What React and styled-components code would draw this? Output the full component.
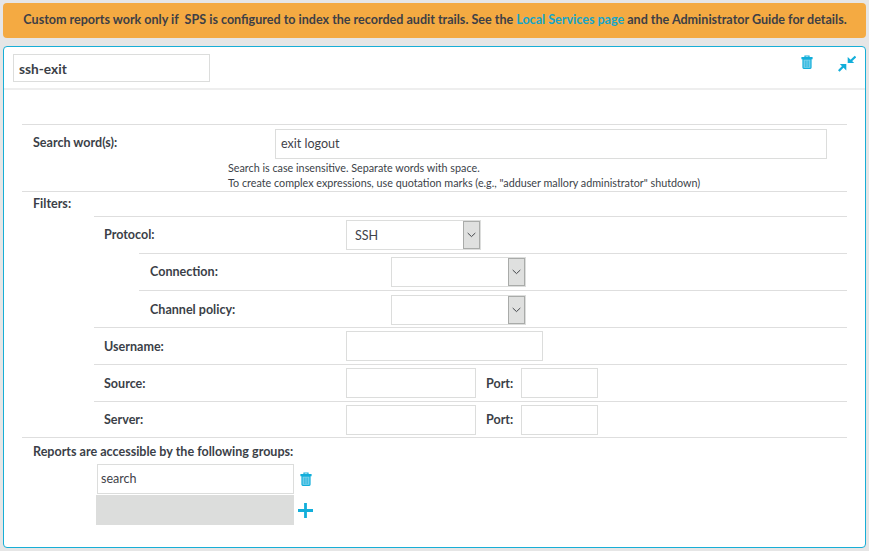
import React from "react";
import styled, { createGlobalStyle } from "styled-components";

const Global = createGlobalStyle`
  html, body { margin: 0; padding: 0; background: #e6e6e6; }
  body { font-family: Lato, "Open Sans", sans-serif; color: #3b3f48; font-size: 12.55px; }
  * { box-sizing: border-box; }
`;
const Page = styled.div`
  width: 869px; height: 551px; padding: 3px; display: flex; flex-direction: column; gap: 8px; overflow: hidden;
`;
const Banner = styled.div`
  height: 35px; background: #f4aa42; border-radius: 4px; display: flex; align-items: center; justify-content: center;
  font-weight: 700; font-size: 12.55px; color: #3d3f46; padding: 0 0 2px 1px; white-space: pre;
`;
const Link = styled.a` color: #14a5c9; `;
const Panel = styled.section`
  height: 502px; background: #fff; border: 1px solid #18aed6; border-radius: 4px; display: flex; flex-direction: column;
`;
const PanelHead = styled.header`
  height: 43px; flex: none; border-bottom: 2px solid #eeeeee; display: flex; justify-content: space-between; padding: 7px 9px 0 9px;
`;
const NameInput = styled.div`
  width: 197px; height: 28px; border: 1px solid #dcdddc; display: flex; align-items: center; padding-left: 5px;
  font-weight: 700; font-size: 13.7px;
`;
const HeadIcons = styled.div` display: flex; gap: 25px; align-items: flex-start; padding-top: 1px; `;
const Body = styled.div` padding: 34px 18px 0 18px; display: flex; flex-direction: column; `;
const Row = styled.div`
  display: flex; align-items: ${p => p.$align || "center"}; height: ${p => p.$h}px; flex: none;
  border-top: 1px solid #dedede; margin-left: ${p => p.$indent || 0}px; padding-left: ${p => p.$pad}px;
`;
const Label = styled.label`
  font-weight: 700; font-size: 12.55px; width: ${p => p.$w}px; flex: none; white-space: nowrap;
  margin-top: ${p => p.$mt || 0}px;
`;
const Field = styled.div`
  height: ${p => p.$h || 30}px; width: ${p => p.$w}px; flex: none; border: 1px solid #dcdddc; background: #fff;
  display: flex; align-items: center; padding: 0 0 ${p => p.$pb || 0}px ${p => p.$pl || 5}px; font-size: 12.55px; color: #3f4249;
  margin-top: ${p => p.$mt || 0}px;
`;
const SelectBox = styled(Field)` padding-left: 8px; justify-content: space-between; padding-right: 0; `;
const Arrow = styled.span`
  width: 17px; height: 28px; background: #dfe0df; border: 1px solid #a9aba9; display: flex; align-items: center; justify-content: center;
`;
const SearchCol = styled.div` display: flex; flex-direction: column; padding-top: 4px; `;
const Help = styled.div` font-size: 10.77px; line-height: 15px; margin: 1px 0 0 -47px; white-space: nowrap; `;
const PortLabel = styled.label` font-weight: 700; font-size: 12.55px; margin-left: 10px; width: 35px; flex: none; `;
const GroupHead = styled.div`
  height: 27px; border-top: 1px solid #dedede; padding: 6px 0 0 11px; font-weight: 700; font-size: 12.55px; line-height: 15px;
`;
const GroupRow = styled.div`
  display: flex; align-items: center; margin-left: ${p => p.$ml}px; margin-top: ${p => p.$mt || 0}px; gap: ${p => p.$gap}px;
`;
const GrayBox = styled.div` width: 198px; height: 30px; background: #dcdddc; `;
const SearchLabelInner = styled.span` display: block; padding-top: 10px; `;

const Trash = ({ size = 12 }) => (
  <svg width={size} height={size * 1.17} viewBox="0 0 12 14">
    <path d="M1 2.6h10v1.1H1z M4 2.6V1h4v1.6" fill="none" stroke="#12aeda" strokeWidth="1.2" />
    <path d="M2 4.2h8v8.2a1 1 0 0 1-1 1H3a1 1 0 0 1-1-1z" fill="#7fd3ec" stroke="#12aeda" strokeWidth="1.2" />
    <path d="M4.3 5.5v6.5M6 5.5v6.5M7.7 5.5v6.5" stroke="#12aeda" strokeWidth=".7" />
  </svg>
);
const Collapse = () => (
  <svg width="18" height="17" viewBox="0 0 18 17">
    <path d="M17.5 1.5 L12.5 6.2" stroke="#12aeda" strokeWidth="2.2" />
    <path d="M9.7 1.9V8h6.5z" fill="#12aeda" />
    <path d="M0.8 16 L5.6 11" stroke="#12aeda" strokeWidth="2.2" />
    <path d="M8.3 15.5V9H1.8z" fill="#12aeda" />
  </svg>
);
const Plus = () => (
  <svg width="17" height="17" viewBox="0 0 17 17">
    <path d="M8.5 1v15M1 8.5h15" stroke="#12aeda" strokeWidth="2.8" />
  </svg>
);
const Chevron = () => (
  <svg width="9" height="6" viewBox="0 0 9 6">
    <path d="M.7 1 L4.5 4.6 L8.3 1" fill="none" stroke="#45484c" strokeWidth="1" />
  </svg>
);
const Select = ({ value, $mt }) => (
  <SelectBox $w={135} $mt={$mt}>
    <span>{value}</span>
    <Arrow><Chevron /></Arrow>
  </SelectBox>
);

export default function App() {
  return (
    <Page>
      <Global />
      <Banner>
        <span>Custom reports work only if  SPS is configured to index the recorded audit trails. See the <Link>Local Services page</Link> and the Administrator Guide for details.</span>
      </Banner>
      <Panel>
        <PanelHead>
          <NameInput>ssh-exit</NameInput>
          <HeadIcons><Trash /><Collapse /></HeadIcons>
        </PanelHead>
        <Body>
          <Row $h={67} $pad={11} $align="flex-start">
            <Label $w={242}><SearchLabelInner>Search word(s):</SearchLabelInner></Label>
            <SearchCol>
              <Field $w={552} $pl={5} $pb={1}>exit logout</Field>
              <Help>
                Search is case insensitive. Separate words with space.<br />
                To create complex expressions, use quotation marks (e.g., "adduser mallory administrator" shutdown)
              </Help>
            </SearchCol>
          </Row>
          <Row $h={25} $pad={11}><Label $mt={-2}>Filters:</Label></Row>
          <Row $h={37} $indent={72} $pad={10}><Label $w={242} $mt={-2}>Protocol:</Label><Select value="SSH" /></Row>
          <Row $h={37} $indent={117} $pad={11}><Label $w={241} $mt={-2}>Connection:</Label><Select /></Row>
          <Row $h={37} $indent={117} $pad={11}><Label $w={241}>Channel policy:</Label><Select $mt={2} /></Row>
          <Row $h={37} $indent={72} $pad={10}><Label $w={242}>Username:</Label><Field $w={197} /></Row>
          <Row $h={37} $indent={72} $pad={10}>
            <Label $w={242}>Source:</Label><Field $w={130} /><PortLabel>Port:</PortLabel><Field $w={77} />
          </Row>
          <Row $h={36} $indent={72} $pad={10}>
            <Label $w={242} $mt={-1}>Server:</Label><Field $w={130} /><PortLabel>Port:</PortLabel><Field $w={77} />
          </Row>
          <GroupHead>Reports are accessible by the following groups:</GroupHead>
          <GroupRow $ml={75} $gap={6}>
            <Field $w={197} $pl={3} $pb={2}>search</Field>
            <Trash />
          </GroupRow>
          <GroupRow $ml={74} $mt={1} $gap={3}>
            <GrayBox /><Plus />
          </GroupRow>
        </Body>
      </Panel>
    </Page>
  );
}
